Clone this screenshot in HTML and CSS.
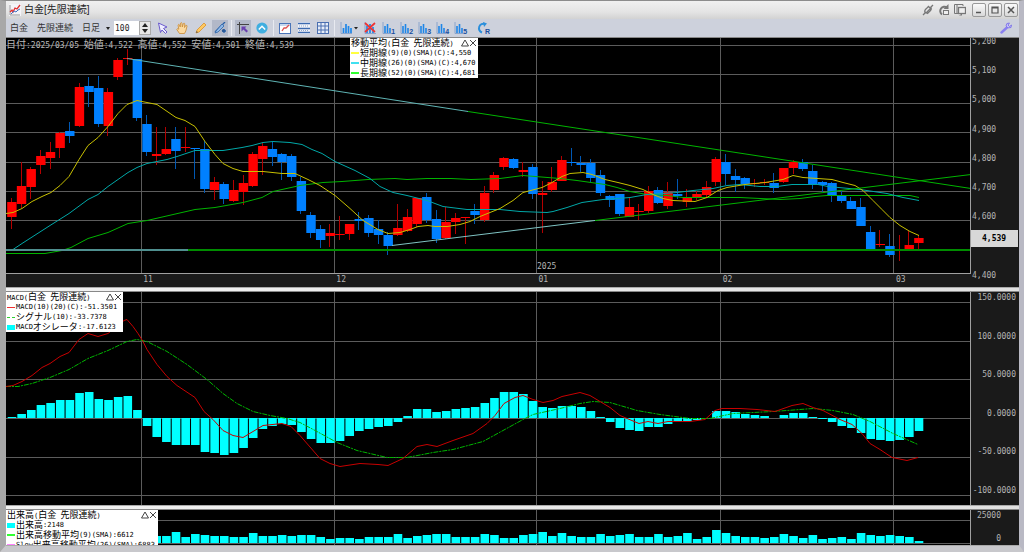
FILE: index.html
```html
<!DOCTYPE html>
<html lang="ja">
<head>
    <meta charset="UTF-8">
    <meta name="viewport" content="width=device-width, initial-scale=1.0">
    <title>白金[先限連続]</title>
    <link rel="stylesheet" href="styles.css">
</head>
<body>
    <div class="window">
        <!-- Title bar -->
        <header class="titlebar">
            <svg class="app-icon" viewBox="0 0 12 12" width="12" height="12">
                <rect x="0" y="0" width="12" height="12" fill="#f4f4f8"/>
                <path d="M1 1v10h10" fill="none" stroke="#999"/>
                <path d="M1 8l2-2 1 2 2-4 2 1 3-4" fill="none" stroke="#e03030" stroke-width="1.3"/>
                <path d="M2 10l3-3 2 1 2-2 2-1" fill="none" stroke="#4070c0"/>
            </svg>
            <h1>白金[先限連続]</h1>
            <div class="title-tools">
                <button type="button" aria-label="リンク">
                    <svg viewBox="0 0 12 12" width="12" height="12"><path d="M1 11l2.500-2.500M11 1L8.500 3.500M3 8.500Q2 6 5 4l1.500-1.500 2 2L5 8q-1.500 1-2 .5zM9 3.500Q10 6 7 8l-1.500 1.500-2-1" fill="none" stroke="#777" stroke-width="1.300"/></svg>
                </button>
                <button type="button" aria-label="更新">
                    <svg viewBox="0 0 12 12" width="12" height="12"><path d="M9 3.500A4.200 4.200 0 1 0 4 10.500" fill="none" stroke="#777" stroke-width="2"/><path d="M10.500 0v5h-5z" fill="#777"/><rect x="5.500" y="6.500" width="5" height="4" fill="#eee" stroke="#777"/></svg>
                </button>
                <button type="button" aria-label="複製">
                    <svg viewBox="0 0 12 12" width="12" height="12"><path d="M9 2V.500H.500v9H4" fill="none" stroke="#777"/><path d="M3 .500v9" stroke="#777"/><rect x="4.500" y="3.500" width="7" height="6" fill="#eee" stroke="#777" stroke-width="1.300"/><path d="M5 11.500l3-2v2z" fill="#777"/></svg>
                </button>
            </div>
            <div class="title-buttons">
                <button type="button" aria-label="最小化"><svg viewBox="0 0 10 10" width="10" height="10"><path d="M2 7.500h5" stroke="#555" stroke-width="1.500"/></svg></button>
                <button type="button" aria-label="最大化"><svg viewBox="0 0 10 10" width="10" height="10"><path d="M2 2h6v6H2zM2 3h6" fill="none" stroke="#555" stroke-width="1.200"/></svg></button>
                <button type="button" aria-label="閉じる"><svg viewBox="0 0 10 10" width="10" height="10"><path d="M2 2l6 6M8 2L2 8" stroke="#555" stroke-width="1.500"/></svg></button>
            </div>
        </header>

        <!-- Toolbar -->
        <nav class="toolbar">
            <button type="button" class="text-btn">白金</button>
            <button type="button" class="text-btn">先限連続</button>
            <span class="period">
                <select aria-label="足種">
                    <option>日足</option>
                </select>
            </span>
            <span class="spin">
                <input type="text" value="100" aria-label="本数">
                <span class="spin-buttons">
                    <button type="button" aria-label="増やす"><svg viewBox="0 0 6 4" width="6" height="4"><path d="M0 4l3-4 3 4z" fill="#222"/></svg></button>
                    <button type="button" aria-label="減らす"><svg viewBox="0 0 6 4" width="6" height="4"><path d="M0 0l3 4 3-4z" fill="#222"/></svg></button>
                </span>
            </span>

            <div class="group">
                <button type="button" class="tool" aria-label="選択"><svg viewBox="0 0 12 12" width="12" height="12"><path d="M1.500 1l8.500 4-3.500 1.500L10 10l-1.500 1.500L5 8l-1.500 2.500z" fill="#eef" stroke="#6a5acd"/></svg></button>
                <button type="button" class="tool" aria-label="移動"><svg viewBox="0 0 12 12" width="12" height="12"><path d="M3.500 11.500L.800 7.500Q1 6 2.800 7.200L2 3q.8-1.400 1.600 0l.6 2L4.500 1.200q1-1.200 1.500 0L6.300 5 7.300 1.500q1-1 1.500.3L8.500 5.500l1.200-2q1.500-.6 1.300.7L9.800 9l-1.300 2.500z" fill="#fbd9a0" stroke="#c98a35" stroke-width=".8"/></svg></button>
                <button type="button" class="tool" aria-label="鉛筆"><svg viewBox="0 0 12 12" width="12" height="12"><path d="M1 11l1-3 7-7 2 2-7 7z" fill="#ffc963" stroke="#d8902c" stroke-width=".8"/><path d="M1 11l.7-2 1.300 1.300z" fill="#555"/></svg></button>
                <button type="button" class="tool active" aria-label="描画"><svg viewBox="0 0 12 12" width="12" height="12"><path d="M1 10L11 0M8 9h4M10 7v4" stroke="#245fa8" stroke-width="1.300"/><path d="M2 9l6-7 2 2-6 6-3 1z" fill="#8fb8e8" stroke="#2e64a8" stroke-width=".8"/><circle cx="9.500" cy="8.500" r="1.600" fill="#285898"/></svg></button>
            </div>
            <div class="group">
                <button type="button" class="tool active" aria-label="十字カーソル"><svg viewBox="0 0 12 12" width="12" height="12"><path d="M2.500 0v12M0 2.500h12" stroke="#444"/><path d="M4.500 4.500h5L8 6l3 3-1.500 1.500-3-3-2 2z" fill="#6a3fb0"/></svg></button>
                <button type="button" class="tool" aria-label="上へ"><svg viewBox="0 0 12 12" width="12" height="12"><circle cx="6" cy="6" r="5.600" fill="#3faee0"/><path d="M2.800 7.500L6 4.300l3.200 3.200" fill="none" stroke="#fff" stroke-width="1.500"/></svg></button>
            </div>
            <div class="group">
                <button type="button" class="tool" aria-label="分析"><svg viewBox="0 0 12 12" width="12" height="12"><rect x=".5" y="1.500" width="11" height="10" fill="#fff" stroke="#4a74b8"/><path d="M1 3h10" stroke="#8fb0dd"/><path d="M3 9l2-3 2 0 3-3" fill="none" stroke="#e05050" stroke-width="1.300"/></svg></button>
                <button type="button" class="tool" aria-label="横線表示"><svg viewBox="0 0 12 12" width="12" height="12"><rect x="0" y="0" width="12" height="12" fill="#f3f5fa"/><path d="M0 1.500h12M0 6.500h12M0 10.500h12" stroke="#3c6ab0" stroke-width="1.400"/><path d="M1 4h10M1 8.500h10" stroke="#8ea6cc" stroke-dasharray="1 1"/></svg></button>
                <button type="button" class="tool" aria-label="格子表示"><svg viewBox="0 0 12 12" width="12" height="12"><rect x=".5" y=".5" width="11" height="11" fill="#e5ecf8" stroke="#4a6fb0"/><path d="M0 4h12M0 8h12M4 0v12M8 0v12" stroke="#4a6fb0"/></svg></button>
            </div>
            <div class="group charts">
                <button type="button" class="tool menu" aria-label="チャート種類"><svg viewBox="0 0 18 12" width="18" height="12"><path d="M1 0v11.500h11" fill="none" stroke="#8aa4cc"/><path d="M3.500 11V6M6 11V2M8.500 11V4M11 11V6" stroke="#1e86e8" stroke-width="1.700"/><path d="M14 5h4l-2 2.500z" fill="#222"/></svg></button>
                <button type="button" class="tool" aria-label="削除"><svg viewBox="0 0 12 12" width="12" height="12"><path d="M1 0v11.500h11" fill="none" stroke="#8aa4cc"/><path d="M3 11V4M6 11V2M9 11V5" stroke="#1e86e8" stroke-width="1.700"/><path d="M1 1l10 9M11 1L1 10" stroke="#e33" stroke-width="1.700"/></svg></button>
                <button type="button" class="tool preset"><svg viewBox="0 0 12 12" width="12" height="12"><path d="M1 0v11.500h11" fill="none" stroke="#8aa4cc"/><path d="M3 11V4M5.500 11V2M8 11V6" stroke="#1e86e8" stroke-width="1.600"/></svg><span>1</span></button>
                <button type="button" class="tool preset"><svg viewBox="0 0 12 12" width="12" height="12"><path d="M1 0v11.500h11" fill="none" stroke="#8aa4cc"/><path d="M3 11V4M5.500 11V2M8 11V6" stroke="#1e86e8" stroke-width="1.600"/></svg><span>2</span></button>
                <button type="button" class="tool preset"><svg viewBox="0 0 12 12" width="12" height="12"><path d="M1 0v11.500h11" fill="none" stroke="#8aa4cc"/><path d="M3 11V4M5.500 11V2M8 11V6" stroke="#1e86e8" stroke-width="1.600"/></svg><span>3</span></button>
                <button type="button" class="tool preset"><svg viewBox="0 0 12 12" width="12" height="12"><path d="M1 0v11.500h11" fill="none" stroke="#8aa4cc"/><path d="M3 11V4M5.500 11V2M8 11V6" stroke="#1e86e8" stroke-width="1.600"/></svg><span>4</span></button>
                <button type="button" class="tool preset"><svg viewBox="0 0 12 12" width="12" height="12"><path d="M1 0v11.500h11" fill="none" stroke="#8aa4cc"/><path d="M3 11V4M5.500 11V2M8 11V6" stroke="#1e86e8" stroke-width="1.600"/></svg><span>5</span></button>
            </div>
            <button type="button" class="tool preset reset" aria-label="リセット"><svg viewBox="0 0 12 12" width="12" height="12"><path d="M5 10.500A4.500 4.500 0 1 1 8 2" fill="none" stroke="#2b8fdc" stroke-width="2"/><path d="M6 0l4 1.500L7 5z" fill="#2b8fdc"/></svg><span>R</span></button>
            <button type="button" class="tool settings" aria-label="設定"><svg viewBox="0 0 12 12" width="12" height="12"><path d="M1.500 10.500L7 5.500" stroke="#8a80f0" stroke-width="2.400" stroke-linecap="round"/><path d="M9.500 1Q6 .5 6 4q1.500 3 5 1.500L11.500 3 9.500 4.500 8 3z" fill="#c6c2fa" stroke="#7468e8" stroke-width=".8"/></svg></button>
        </nav>

        <!-- Chart panels -->
        <main class="panels">
            <section class="panel price">
                <div class="plot">
                    <svg class="chart" id="priceChart"></svg>
                    <p class="quote"><b>日付</b>:2025/03/05 <b>始値</b>:4,522 <b>高値</b>:4,552 <b>安値</b>:4,501 <b>終値</b>:4,539</p>
                    <div class="legend legend-price">
                        <div class="legend-head">
                            <h2><b>移動平均</b>(<b>白金</b> <b>先限連続</b>)</h2>
                            <button type="button" aria-label="折りたたむ"><svg viewBox="0 0 8 8" width="8" height="8"><path d="M4 1l3.500 6h-7z" fill="none" stroke="#444"/></svg></button>
                            <button type="button" aria-label="閉じる"><svg viewBox="0 0 8 8" width="8" height="8"><path d="M1 1l6 6M7 1L1 7" stroke="#444"/></svg></button>
                        </div>
                        <ul>
                            <li><i class="line yellow"></i><b>短期線</b>(9)(0)(SMA)(C):4,550</li>
                            <li><i class="line cyan"></i><b>中期線</b>(26)(0)(SMA)(C):4,670</li>
                            <li><i class="line green"></i><b>長期線</b>(52)(0)(SMA)(C):4,681</li>
                        </ul>
                    </div>
                </div>
                <svg class="x-axis" id="dateAxis"></svg>
                <svg class="y-axis" id="priceAxis"></svg>
            </section>

            <section class="panel">
                <div class="plot">
                    <svg class="chart" id="macdChart"></svg>
                    <div class="legend legend-macd">
                        <div class="legend-head">
                            <h2>MACD(<b>白金</b> <b>先限連続</b>)</h2>
                            <button type="button" aria-label="折りたたむ"><svg viewBox="0 0 8 8" width="8" height="8"><path d="M4 1l3.500 6h-7z" fill="none" stroke="#444"/></svg></button>
                            <button type="button" aria-label="閉じる"><svg viewBox="0 0 8 8" width="8" height="8"><path d="M1 1l6 6M7 1L1 7" stroke="#444"/></svg></button>
                        </div>
                        <ul>
                            <li><i class="line red"></i>MACD(10)(20)(C):-51.3501</li>
                            <li><i class="line dashed"></i><b>シグナル</b>(10):-33.7378</li>
                            <li><i class="box"></i>MACD<b>オシレータ</b>:-17.6123</li>
                        </ul>
                    </div>
                </div>
                <svg class="y-axis" id="macdAxis"></svg>
            </section>

            <section class="panel volume">
                <div class="plot">
                    <svg class="chart" id="volumeChart"></svg>
                    <div class="legend legend-volume">
                        <div class="legend-head">
                            <h2><b>出来高</b>(<b>白金</b> <b>先限連続</b>)</h2>
                            <button type="button" aria-label="折りたたむ"><svg viewBox="0 0 8 8" width="8" height="8"><path d="M4 1l3.500 6h-7z" fill="none" stroke="#444"/></svg></button>
                            <button type="button" aria-label="閉じる"><svg viewBox="0 0 8 8" width="8" height="8"><path d="M1 1l6 6M7 1L1 7" stroke="#444"/></svg></button>
                        </div>
                        <ul>
                            <li><i class="box"></i><b>出来高</b>:2148</li>
                            <li><i class="line green"></i><b>出来高移動平均</b>(9)(SMA):6612</li>
                            <li><i class="line pink"></i>Slow<b>出来高移動平均</b>(26)(SMA):6883</li>
                        </ul>
                    </div>
                </div>
                <svg class="y-axis" id="volumeAxis"></svg>
            </section>
        </main>
    </div>

    <script src="chart.js"></script>
</body>
</html>
```

FILE: styles.css
```css
* {
    margin: 0;
    padding: 0;
    box-sizing: border-box;
}

body {
    height: 100vh;
    overflow: hidden;
    background: #d4d4d8;
    font-family: 'Liberation Sans', 'Noto Sans CJK JP', sans-serif;
    color: #333;
}

button {
    border: none;
    background: transparent;
    color: inherit;
    font-family: inherit;
    cursor: pointer;
}

svg {
    display: block;
}

.window {
    height: 100%;
    display: flex;
    flex-direction: column;
    border-style: solid;
    border-width: 1px 5px 7px 6px;
    border-color: #8c8c8c #b9b9c4 #c8c8cc #a8a8a8;
}

/* Title bar */
.titlebar {
    display: flex;
    align-items: center;
    flex: none;
    height: 18px;
    padding: 0 1px 0 3px;
    background: linear-gradient(#f0f0f0, #e4e4e4 60%, #d2d2d2);
}

.titlebar h1 {
    margin-left: 3px;
    font-size: 10px;
    font-weight: normal;
    line-height: 16px;
    color: #222;
}

.title-tools {
    display: flex;
    gap: 4px;
    margin-left: auto;
}

.title-buttons {
    display: flex;
    gap: 2px;
    margin-left: 6px;
}

.title-buttons button {
    display: flex;
    align-items: center;
    justify-content: center;
    width: 14px;
    height: 14px;
    border: 1px solid #999;
    border-radius: 2px;
    background: linear-gradient(#fafafa, #d8d8d8);
}

/* Toolbar */
.toolbar {
    display: flex;
    align-items: center;
    flex: none;
    height: 19px;
    padding: 0 5px 0 4px;
    background: #cdd1dc;
    border-bottom: 1px solid #8c9098;
}

.text-btn,
.period select {
    font-family: 'Liberation Sans', 'Noto Sans CJK JP', sans-serif;
    font-size: 9px;
    line-height: 16px;
    color: #333;
}

.text-btn {
    margin-right: 9px;
}

.period {
    position: relative;
}

.period select {
    display: block;
    width: 32px;
    height: 16px;
    border: none;
    background: transparent;
    appearance: none;
}

.period::after {
    content: "";
    position: absolute;
    right: 4px;
    top: 7px;
    border: 2px solid transparent;
    border-top: 3px solid #222;
    pointer-events: none;
}

.spin {
    display: flex;
    height: 14px;
    margin-right: 4px;
}

.spin input {
    width: 25px;
    padding-left: 1px;
    border: none;
    background: #fff;
    font-family: 'DejaVu Sans Mono', monospace;
    font-size: 8px;
    color: #222;
}

.spin-buttons {
    display: flex;
    flex-direction: column;
    width: 12px;
    background: #e6e6e6;
    border: 1px solid #aaa;
}

.spin-buttons button {
    display: flex;
    flex: 1;
    align-items: center;
    justify-content: center;
}

.group {
    display: flex;
    gap: 3px;
    padding-right: 3px;
    margin-right: 3px;
    border-right: 1px solid #e8eaf0;
}

.group.charts {
    gap: 2px;
    border-right-color: transparent;
}

.tool {
    display: flex;
    align-items: center;
    justify-content: center;
    width: 16px;
    height: 16px;
}

.tool.active {
    background: #b2b8c8;
}

.tool.menu {
    width: 22px;
}

.preset {
    position: relative;
}

.preset span {
    position: absolute;
    right: 1px;
    bottom: 1px;
    font-size: 7px;
    font-weight: bold;
    line-height: 7px;
    color: #1a4fa0;
}

.settings {
    margin-left: auto;
}

/* Panels */
.panels {
    flex: 1;
    min-height: 0;
    display: grid;
    grid-template-rows: minmax(0, 249fr) minmax(0, 213fr) minmax(0, 35fr);
    gap: 5px;
    background: linear-gradient(90deg, #f2f2f2, #e0e0e0);
}

.panel {
    display: grid;
    grid-template-columns: minmax(0, 1fr) 48px;
    grid-template-rows: minmax(0, 1fr);
    background: #1a1a1a;
    box-shadow: 0 -1px 0 #888, 0 1px 0 #aaa;
}

.panel.price {
    grid-template-rows: minmax(0, 1fr) 13px;
}

.plot {
    position: relative;
    background: #000;
    border-right: 1px solid #a0a0a0;
}

.price .plot {
    border-bottom: 1px solid #a0a0a0;
}

.volume .plot {
    overflow: hidden;
}

.chart,
.x-axis,
.y-axis {
    width: 100%;
    height: 100%;
}

.y-axis {
    grid-column: 2;
    grid-row: 1 / -1;
}

.x-axis {
    grid-column: 1;
    grid-row: 2;
}

.chart text,
.x-axis text,
.y-axis text {
    font-family: 'DejaVu Sans Mono', monospace;
    font-size: 8px;
    fill: #b4b4b4;
}

.y-axis .last-price {
    font-size: 8px;
    font-weight: bold;
    fill: #000;
}

.quote {
    position: absolute;
    left: 0;
    top: 0;
    font-family: 'DejaVu Sans Mono', 'Noto Sans CJK JP', monospace;
    font-size: 8px;
    line-height: 12px;
    color: #b8b8b8;
    white-space: nowrap;
}

.quote b {
    font-family: 'Noto Sans CJK JP', sans-serif;
    font-size: 10px;
    font-weight: normal;
}

/* Legends */
.legend {
    position: absolute;
    left: 0;
    top: 0;
    padding: 0 1px;
    background: #fff;
    font-family: 'DejaVu Sans Mono', 'Noto Sans CJK JP', monospace;
    font-size: 7px;
    color: #000;
    white-space: nowrap;
}

.legend-price {
    left: 344px;
    width: 128px;
}

.legend-macd {
    width: 117px;
}

.legend-volume {
    width: 152px;
}

.legend-head {
    display: flex;
    align-items: center;
    height: 10px;
}

.legend-head h2 {
    flex: 1;
    font-size: 7px;
    font-weight: normal;
    line-height: 10px;
}

.legend-head b {
    line-height: 10px;
}

.legend ul {
    list-style: none;
}

.legend li {
    display: flex;
    align-items: center;
    height: 10px;
    line-height: 10px;
}

.legend b {
    font-family: 'Noto Sans CJK JP', sans-serif;
    font-size: 9px;
    font-weight: normal;
}

.legend i {
    flex: none;
    width: 8px;
    height: 2px;
    margin-right: 1px;
}

.legend .yellow {
    background: #ffff40;
}

.legend .cyan {
    background: #40e0f0;
}

.legend .green {
    background: #30ff30;
}

.legend .red {
    height: 1px;
    background: #f03030;
}

.legend .pink {
    background: #ff80ff;
}

.legend .dashed {
    height: 1px;
    border-top: 1px dashed #30d030;
}

.legend .box {
    height: 5px;
    background: #00ffff;
}
```

FILE: chart.js
```javascript
const NS = 'http://www.w3.org/2000/svg';
const BASE_WIDTH = 964;

// high, body top, body bottom, low, up (1) or down (0)
const candles = [
    [160,164,179,191,1],[124,148,166,170,1],[129,131,149,161,1],[112,118,127,136,1],[104,114,120,131,1],
    [94,95,110,120,1],[84,93,98,105,0],[45,49,88,89,1],[39,48,54,69,0],[38,50,86,89,0],
    [50,54,88,98,1],[20,22,39,42,1],[11,20,21,27,1],[21,21,80,83,0],[77,86,114,118,0],
    [89,116,118,127,1],[89,111,116,117,1],[89,101,113,131,0],[89,109,110,114,1],[110,110,111,141,0],
    [103,111,151,155,0],[139,144,152,162,1],[144,146,161,166,0],[142,152,163,164,1],[137,145,154,167,1],
    [114,116,148,149,1],[104,108,121,137,1],[104,111,119,128,0],[115,116,124,142,0],[116,118,139,143,0],
    [139,143,173,176,0],[174,177,195,200,0],[187,191,202,210,0],[186,195,198,209,1],[178,196,197,202,1],
    [186,186,196,202,1],[174,181,183,192,0],[177,180,195,199,0],[182,191,197,206,0],[194,197,208,217,0],
    [166,190,197,198,1],[171,179,193,194,1],[160,160,186,189,1],[155,159,182,185,0],[172,181,201,205,0],
    [169,184,200,201,1],[175,180,184,196,1],[179,179,180,206,1],[166,173,177,186,0],[148,155,182,184,1],
    [134,137,152,155,1],[119,120,129,132,1],[120,121,130,131,0],[124,132,134,139,1],[126,129,156,161,0],
    [143,155,157,195,1],[129,144,152,154,1],[118,122,143,143,1],[110,124,125,128,0],[118,125,127,134,0],
    [121,125,140,145,0],[132,137,155,158,0],[157,158,162,169,0],[156,156,176,178,0],[159,169,179,179,1],
    [166,173,174,182,1],[148,153,173,175,1],[149,152,165,166,0],[144,154,168,171,1],[141,156,158,161,0],
    [151,160,164,169,1],[153,156,160,162,1],[143,149,157,159,1],[119,121,144,148,1],[116,124,136,147,0],
    [131,138,142,154,0],[139,140,146,151,0],[141,145,146,149,1],[141,144,145,147,1],[135,145,150,155,0],
    [130,130,144,145,1],[122,124,130,136,1],[121,124,131,133,0],[127,133,146,151,0],[143,144,147,154,0],
    [144,145,157,164,0],[153,157,163,165,0],[159,163,171,171,0],[160,169,188,188,0],[188,194,212,212,0],
    [192,206,207,209,1],[196,208,217,219,0],[197,212,213,223,1],[193,207,212,213,1],[197,200,205,211,1]
];

const oscillator = [
    1,4,8,13,15,18,18,25,26,19,18,21,22,8,-8,-19,-24,-27,-27,-27,-34,-35,-37,-35,-30,-20,-11,-8,-6,-7,
    -14,-21,-25,-25,-23,-18,-13,-11,-9,-8,-4,2,9,9,6,7,9,10,11,15,20,26,26,24,17,11,10,12,12,11,
    7,1,-4,-10,-12,-13,-9,-9,-6,-4,-3,-2,0,7,7,6,4,3,2,0,3,5,5,1,-1,-4,-8,-10,-15,-21,
    -22,-23,-22,-19,-13
];

const volumes = [
    7,7,7,7,7,7,7,7,7,7,7,7,7,7,7,7,7,11,6,9,8,7,7,6,6,10,7,7,8,7,
    8,8,6,4,5,5,4,6,6,6,9,5,7,8,9,9,6,6,6,9,8,5,5,8,9,11,7,10,7,6,
    6,9,7,8,9,6,6,9,6,7,10,4,6,13,10,7,6,6,5,6,9,7,5,8,4,5,6,4,10,8,
    7,8,7,6,2
];

const shortMa = '0,175 7,174 16,170 26,163 36,158 45,154 54,147 63,138 73,121 82,107 92,99 102,88 112,75 121,66 131,62 141,64 151,66 170,79 179,82 189,88 199,103 209,116 217,125 227,130 237,133 257,133 276,135 289,135 302,141 314,147 329,157 344,170 357,182 372,191 382,195 394,194 404,191 412,188 422,187 429,188 441,188 454,186 464,183 474,178 484,174 494,170 507,162 517,154 536,149 546,144 556,138 564,135 577,134 586,136 599,141 612,144 624,147 637,151 647,156 657,160 667,162 689,163 701,159 712,152 721,149 739,146 759,144 777,141 787,137 797,139 826,141 837,144 849,147 857,152 867,162 876,171 884,179 894,187 904,193 913,197';
const midMa = '7,211 16,205 44,187 63,175 82,161 92,156 102,148 112,141 122,134 131,129 141,125 161,121 171,118 189,112 217,112 236,109 246,107 257,104 267,103 284,104 296,106 306,111 316,115 329,123 349,132 364,140 374,148 387,154 401,157 421,162 437,168 461,171 494,171 514,173 541,174 547,173 561,169 576,164 597,161 624,159 641,156 671,154 687,152 707,150 721,147 734,146 754,148 771,148 786,146 812,146 822,148 854,151 881,155 897,159 913,162';
const longMa = '0,215 39,215 56,212 65,209 82,200 102,194 122,185 141,182 189,171 209,169 237,164 256,159 267,153 294,147 317,144 336,143 362,141 389,140 401,141 421,140 445,140 465,141 494,140 517,137 554,140 571,142 599,146 611,149 624,153 641,156 661,157 677,159 734,159 774,161 794,160 809,158 821,157 904,157 913,159';
const macdLine = '0,94 7,93 16,89 26,83 36,75 44,71 54,64 63,60 73,47 82,41 92,44 102,41 107,37 118,28 121,27 127,34 132,41 137,49 141,57 151,72 161,84 171,93 189,105 198,119 207,127 217,138 227,143 237,145 247,139 257,133 276,131 285,134 294,143 314,166 324,171 334,174 354,171 372,172 382,173 397,166 411,154 421,152 431,154 447,148 467,141 481,131 489,123 498,111 509,105 517,103 527,107 537,110 547,108 556,104 574,100 584,103 604,115 614,123 633,131 642,129 652,131 662,129 684,129 699,127 709,118 716,116 734,116 751,117 769,119 786,113 797,111 807,115 817,118 834,127 846,132 856,141 864,151 874,157 886,165 901,168 912,165';
const signalLine = '0,94 12,94 26,91 44,85 63,77 82,66 102,58 121,49 131,47 141,49 161,59 181,72 201,87 217,101 231,111 247,119 264,123 281,126 294,130 311,139 331,150 351,158 381,165 401,165 427,160 447,157 477,149 497,138 517,127 527,122 554,116 574,111 587,109 604,110 631,118 654,122 684,126 704,126 727,121 767,119 781,118 807,116 827,118 847,122 864,129 887,141 912,152';

const months = [[136, '11'], [329, '12'], [531, '01'], [715, '02'], [888, '03']];

function add(svg, name, attrs, text) {
    const el = document.createElementNS(NS, name);
    for (const key in attrs) el.setAttribute(key, attrs[key]);
    if (text) el.textContent = text;
    svg.appendChild(el);
    return el;
}

// Clears an svg and returns it with its scale factors
function prepare(id, baseHeight) {
    const svg = document.getElementById(id);
    svg.innerHTML = '';
    const box = svg.getBoundingClientRect();
    return { svg, w: box.width, h: box.height, kx: box.width / BASE_WIDTH, ky: box.height / baseHeight };
}

function slot(i) {
    return 6 + i * 907 / 94;
}

function grid(c, rows) {
    rows.forEach(y => {
        const py = Math.round(y * c.ky) + 0.5;
        add(c.svg, 'line', { x1: 0, x2: c.w, y1: py, y2: py, stroke: '#5c5c5c' });
    });
    months.forEach(([x]) => {
        const px = Math.round(x * c.kx) - 0.5;
        add(c.svg, 'line', { x1: px, x2: px, y1: 0, y2: c.h, stroke: '#5c5c5c' });
    });
}

function line(c, points, color, dash) {
    const scaled = points.split(' ').map(p => {
        const [x, y] = p.split(',');
        return x * c.kx + ',' + (y * c.ky + 0.5);
    }).join(' ');
    const el = add(c.svg, 'polyline', { points: scaled, fill: 'none', stroke: color });
    if (dash) el.setAttribute('stroke-dasharray', dash);
}

function level(c, y, from, to, color) {
    const py = Math.round(y * c.ky);
    add(c.svg, 'line', { x1: from * c.kx, x2: to * c.kx, y1: py, y2: py, stroke: color, 'stroke-width': 2 });
}

function bars(c, values, zero) {
    values.forEach((v, i) => {
        if (!v) return;
        const x = (slot(i) - 4.3) * c.kx;
        const y = (v > 0 ? zero - v : zero) * c.ky;
        add(c.svg, 'rect', { x, y, width: 8.6 * c.kx, height: Math.abs(v) * c.ky, fill: '#00ffff' });
    });
}

function drawPrice() {
    const c = prepare('priceChart', 235);
    grid(c, [7, 36, 65, 94, 124, 153, 182]);
    candles.forEach(([high, top, bottom, low, up], i) => {
        const x = slot(i) * c.kx;
        const px = Math.round(x) - 0.5;
        add(c.svg, 'line', { x1: px, x2: px, y1: high * c.ky, y2: low * c.ky, stroke: up ? '#b40000' : '#0058b4' });
        add(c.svg, 'rect', { x: x - 4.8 * c.kx, y: top * c.ky, width: 9.4 * c.kx, height: (bottom - top) * c.ky, fill: up ? '#ff0000' : '#0080ff' });
    });
    line(c, longMa, '#00b400');
    line(c, midMa, '#00a8a8');
    line(c, shortMa, '#c8c000');
    line(c, '121,20 462,73', '#5fb4b4');
    line(c, '462,73 965,150', '#00b400');
    line(c, '386,207 589,182', '#7fc4c4');
    line(c, '589,182 965,136', '#00b400');
    level(c, 212, 0, 182, '#4f8f8f');
    level(c, 212, 182, 965, '#008c00');
    add(c.svg, 'text', { x: 531 * c.kx, y: c.h - 4 }, '2025');
}

function drawAxes() {
    const dates = prepare('dateAxis', 13);
    months.forEach(([x, label]) => add(dates.svg, 'text', { x: x * dates.kx + 1, y: 8 }, label));

    const price = prepare('priceAxis', 249);
    ['5,200', '5,100', '5,000', '4,900', '4,800', '4,700', '4,600', '', '4,400'].forEach((label, i) => {
        if (label) add(price.svg, 'text', { x: 1, y: (6 + i * 29.2) * price.ky }, label);
    });
    add(price.svg, 'rect', { x: 0, y: 192 * price.ky, width: 47, height: 17, fill: '#d8d8d8' });
    add(price.svg, 'text', { x: 11, y: 192 * price.ky + 11, class: 'last-price' }, '4,539');

    const macd = prepare('macdAxis', 213);
    ['150.0000', '100.0000', '50.0000', '0.0000', '-50.0000', '-100.0000'].forEach((label, i) => {
        add(macd.svg, 'text', { x: 45, y: (8 + i * 38.6) * macd.ky, 'text-anchor': 'end' }, label);
    });

    const volume = prepare('volumeAxis', 35);
    add(volume.svg, 'text', { x: 30, y: 8, 'text-anchor': 'end' }, '25000');
    add(volume.svg, 'text', { x: 30, y: 31, 'text-anchor': 'end' }, '0');
}

function drawMacd() {
    const c = prepare('macdChart', 213);
    grid(c, [10, 49, 87, 126, 165, 203]);
    bars(c, oscillator, 126);
    line(c, signalLine, '#00b400', '5 1 2 1');
    line(c, macdLine, '#c80000');
}

function drawVolume() {
    const c = prepare('volumeChart', 35);
    grid(c, [10, 33]);
    bars(c, volumes, 33);
}

function draw() {
    drawPrice();
    drawAxes();
    drawMacd();
    drawVolume();
}

draw();
window.addEventListener('resize', draw);
```
